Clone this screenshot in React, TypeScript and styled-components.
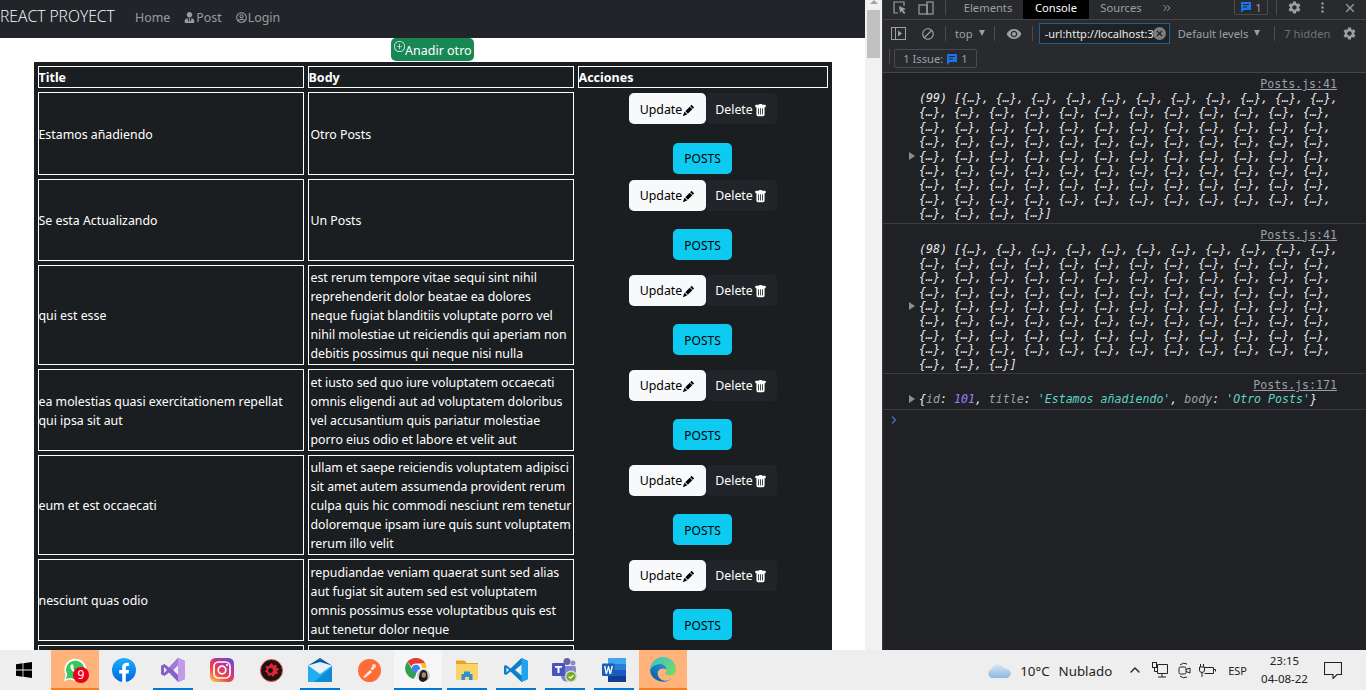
import React from "react";
import styled, { createGlobalStyle } from "styled-components";
import {
  BsFillPencilFill,
  BsFillTrashFill,
  BsPlusCircle,
  BsThreeDotsVertical,
} from "react-icons/bs";
import { FaRegUserCircle, FaUserTie } from "react-icons/fa";
import { MdBlock, MdSettings, MdVisibility } from "react-icons/md";
import { ChevronRight, ChevronUp, ChevronsRight, X } from "lucide-react";

const uiFont = `"Noto Sans", "Open Sans", sans-serif`;
const monoFont = `"DejaVu Sans Mono", "Liberation Mono", monospace`;

const GlobalStyle = createGlobalStyle`
  html, body {
    margin: 0;
    padding: 0;
    height: 690px;
    overflow: hidden;
    font-family: ${uiFont};
  }
  * { box-sizing: border-box; }
`;

const Screen = styled.div`
  width: 1366px;
  height: 690px;
  display: flex;
  flex-direction: column;
`;

const Workspace = styled.div`
  display: flex;
  height: 650px;
  overflow: hidden;
`;

/* ---------- page ---------- */

const Page = styled.div`
  width: 865px;
  height: 650px;
  overflow: hidden;
  background: #fff;
`;

const Navbar = styled.nav`
  height: 38px;
  background: #212529;
  display: flex;
  align-items: center;
`;

const Brand = styled.span`
  width: 135px;
  font-family: "Open Sans", sans-serif;
  font-weight: 300;
  font-size: 15.7px;
  color: #fff;
  white-space: nowrap;
  margin-top: -6px;
`;

const NavLink = styled.a`
  display: inline-flex;
  align-items: center;
  font-size: 12.4px;
  color: rgba(255, 255, 255, 0.55);
  margin-right: 14px;
  margin-top: -4px;
  svg {
    width: 11px;
    height: 11px;
    margin-right: 1px;
  }
`;

const AddRow = styled.div`
  display: flex;
  justify-content: center;
  height: 24px;
`;

const AddButton = styled.button`
  width: 83px;
  height: 23px;
  padding: 2px 2px 0 3px;
  border: 0;
  border-radius: 5px;
  background: #198754;
  color: #fff;
  font-family: ${uiFont};
  font-size: 12.5px;
  display: flex;
  align-items: center;
  white-space: nowrap;
  svg {
    width: 11px;
    height: 11px;
    margin-top: -9px;
    flex: none;
  }
`;

const PostsTable = styled.table`
  width: 798px;
  margin: 0 auto;
  table-layout: fixed;
  border-collapse: separate;
  border-spacing: 4px;
  background: #1b1e20;
  color: #fff;
  font-size: 12.35px;
  line-height: 19.1px;
`;

const HeadCell = styled.th`
  border: 1px solid #fff;
  padding: 1px 0 0;
  height: 22px;
  text-align: left;
  font-size: 12.5px;
  font-weight: 700;
`;

const Cell = styled.td<{ $body?: boolean }>`
  border: 1px solid #fff;
  padding: 2px 0 0 ${(p) => (p.$body ? "2px" : "0")};
  letter-spacing: ${(p) => (p.$body ? "-0.03px" : "0")};
  vertical-align: middle;
  white-space: pre-line;
`;

const ActionCell = styled.td`
  padding: 1px;
  text-align: center;
  vertical-align: middle;
`;

const ButtonGroup = styled.div`
  display: inline-flex;
  vertical-align: top;
`;

const GroupButton = styled.button<{ $dark?: boolean }>`
  height: 31px;
  width: ${(p) => (p.$dark ? "71px" : "77px")};
  border: 0;
  border-radius: 5px;
  background: ${(p) => (p.$dark ? "#212529" : "#f8f9fa")};
  color: ${(p) => (p.$dark ? "#fff" : "#000")};
  font-family: ${uiFont};
  font-size: 12.35px;
  padding: 1px 0 0;
  display: inline-flex;
  align-items: center;
  justify-content: center;
  svg {
    width: ${(p) => (p.$dark ? "13px" : "11px")};
    height: ${(p) => (p.$dark ? "13px" : "11px")};
    margin-top: 2px;
    margin-left: 1px;
  }
`;

const PostsButton = styled.button`
  display: block;
  width: 59px;
  height: 31px;
  margin: 18.5px auto 0;
  border: 0;
  border-radius: 5px;
  background: #0dcaf0;
  color: #000;
  font-family: ${uiFont};
  font-size: 12px;
  padding: 1px 0 0;
`;

const Scrollbar = styled.div`
  width: 17px;
  height: 650px;
  background: #f1f1f1;
  padding: 0 2px;
`;

const ScrollArrow = styled.div`
  width: 0;
  height: 0;
  margin: 0 auto 6px;
  border-left: 4px solid transparent;
  border-right: 4px solid transparent;
  border-bottom: 4px solid #a3a3a3;
`;

const ScrollThumb = styled.div`
  height: 48px;
  background: #c1c1c1;
`;

/* ---------- devtools ---------- */

const DevTools = styled.div`
  width: 484px;
  height: 650px;
  background: #202124;
  border-left: 1px solid #3c3c3e;
  color: #bdc1c6;
  font-family: ${uiFont};
  font-size: 11.2px;
`;

const TabBar = styled.div`
  height: 20px;
  background: #292a2d;
  border-bottom: 1px solid #45464a;
  display: flex;
  align-items: flex-start;
  padding-left: 9px;
`;

const ToolIcon = styled.span<{ $w?: number; $ml?: number }>`
  display: inline-flex;
  align-items: center;
  justify-content: center;
  flex: none;
  height: 15px;
  width: ${(p) => p.$w ?? 16}px;
  margin-left: ${(p) => p.$ml ?? 0}px;
  color: #9aa0a6;
`;

const VSep = styled.span<{ $ml?: number; $mr?: number; $h?: number }>`
  flex: none;
  width: 1px;
  height: ${(p) => p.$h ?? 15}px;
  background: #4a4b4f;
  margin-left: ${(p) => p.$ml ?? 0}px;
  margin-right: ${(p) => p.$mr ?? 0}px;
`;

const Tab = styled.span<{ $active?: boolean; $w: number }>`
  flex: none;
  width: ${(p) => p.$w}px;
  height: 19px;
  text-align: center;
  line-height: 15px;
  color: ${(p) => (p.$active ? "#fff" : "#9aa0a6")};
  background: ${(p) => (p.$active ? "#000" : "transparent")};
`;

const CountBadge = styled.span`
  flex: none;
  width: 34px;
  height: 15px;
  margin-left: 53px;
  border: 1px solid #4a4b4f;
  border-top: 0;
  border-radius: 0 0 2px 2px;
  display: inline-flex;
  align-items: center;
  justify-content: center;
  gap: 3px;
  color: #9aa0a6;
`;

const FilterRow = styled.div`
  height: 29px;
  background: #292a2d;
  display: flex;
  align-items: center;
  padding: 0 0 2px 8px;
  > svg {
    flex: none;
  }
`;

const Muted = styled.span<{ $dim?: boolean; $ml?: number }>`
  flex: none;
  margin-left: ${(p) => p.$ml ?? 0}px;
  color: ${(p) => (p.$dim ? "#6f7377" : "#9aa0a6")};
  white-space: nowrap;
`;

const Caret = styled.span`
  display: inline-block;
  flex: none;
  margin-left: 6px;
  margin-bottom: 2px;
  width: 0;
  height: 0;
  border-left: 3.5px solid transparent;
  border-right: 3.5px solid transparent;
  border-top: 6px solid #9aa0a6;
`;

const FilterInput = styled.div`
  flex: none;
  width: 131px;
  height: 21px;
  border: 1px solid #1f5f8b;
  background: #202124;
  color: #e8eaed;
  font-size: 11px;
  line-height: 19px;
  padding-left: 5px;
  overflow: hidden;
  white-space: nowrap;
  display: flex;
  align-items: center;
  justify-content: space-between;
  position: relative;
`;

const ClearDot = styled.span`
  position: absolute;
  right: 3px;
  top: 3px;
  width: 13px;
  height: 13px;
  border-radius: 50%;
  background: #7b7d80;
  color: #202124;
  display: inline-flex;
  align-items: center;
  justify-content: center;
`;

const IssueRow = styled.div`
  height: 24px;
  background: #292a2d;
  border-bottom: 1px solid #45464a;
  display: flex;
  align-items: flex-start;
  padding-left: 6px;
`;

const IssueBadge = styled.span`
  width: 83px;
  height: 19px;
  margin-left: 4px;
  border: 1px solid #4a4b4f;
  border-radius: 2px;
  display: inline-flex;
  align-items: center;
  justify-content: center;
  gap: 3px;
  color: #9aa0a6;
`;

const ConsoleRow = styled.div<{ $pb?: number }>`
  padding: 4px 29px ${(p) => p.$pb ?? 2}px 36px;
  border-bottom: 1px solid #3a3b3e;
  font-family: ${monoFont};
  font-size: 11.6px;
  line-height: 14.4px;
  color: #e8eaed;
`;

const Source = styled.div`
  text-align: right;
  color: #9aa0a6;
  line-height: 14px;
  height: 14px;
  text-decoration: underline;
`;

const LogLine = styled.div<{ $marker?: boolean }>`
  font-style: italic;
  white-space: pre;
  height: 14.4px;
  &::before {
    content: "";
    display: ${(p) => (p.$marker ? "inline-block" : "none")};
    width: 0;
    height: 0;
    margin-left: -10px;
    margin-right: 4px;
    border-top: 4px solid transparent;
    border-bottom: 4px solid transparent;
    border-left: 6px solid #8b8e92;
  }
`;

const Key = styled.span`
  color: #9aa0a6;
`;
const Num = styled.span`
  color: #9980ff;
`;
const Str = styled.span`
  color: #5cd5c5;
`;

const Prompt = styled.div`
  padding: 4px 0 0 5px;
  color: #3f6fbf;
  display: flex;
`;

/* ---------- taskbar ---------- */

const Taskbar = styled.div`
  height: 40px;
  background: #eeeeee;
  display: flex;
  align-items: stretch;
  font-family: ${uiFont};
`;

const StartButton = styled.div`
  width: 51px;
  display: flex;
  align-items: center;
  padding-left: 16px;
`;

const TaskItem = styled.div<{ $state?: "open" | "active" | "flash" }>`
  position: relative;
  flex: none;
  width: 48px;
  margin-right: 1px;
  display: flex;
  align-items: center;
  justify-content: center;
  background: ${(p) =>
    p.$state === "flash"
      ? "#ffb27a"
      : p.$state === "active"
      ? "#f6f6f6"
      : "transparent"};
  &::after {
    content: "";
    display: ${(p) => (p.$state ? "block" : "none")};
    position: absolute;
    bottom: 0;
    left: ${(p) => (p.$state === "open" ? "4px" : "0")};
    right: ${(p) => (p.$state === "open" ? "4px" : "0")};
    height: 2px;
    background: ${(p) => (p.$state === "flash" ? "#ff7a18" : "#0078d4")};
  }
`;

const CountDot = styled.span`
  position: absolute;
  left: 22px;
  top: 17px;
  width: 16px;
  height: 16px;
  border-radius: 50%;
  background: #e8001c;
  color: #fff;
  font-size: 12px;
  line-height: 16px;
  text-align: center;
`;

const Tray = styled.div`
  margin-left: auto;
  display: flex;
  align-items: center;
  color: #222;
  font-size: 13.3px;
  padding-right: 24px;
`;

const Weather = styled.span`
  display: inline-flex;
  align-items: center;
  white-space: nowrap;
  margin-right: 15px;
  padding-top: 1px;
  gap: 9px;
`;

const TrayIcon = styled.span<{ $mr: number }>`
  display: inline-flex;
  margin-right: ${(p) => p.$mr}px;
  color: #222;
`;

const Lang = styled.span`
  font-size: 11px;
  margin-right: 14px;
`;

const Clock = styled.div`
  width: 47px;
  font-size: 11.5px;
  line-height: 18px;
  white-space: nowrap;
  text-align: center;
  margin-right: 16px;
`;

/* ---------- drawings ---------- */

const InspectIcon = () => (
  <svg width="16" height="15" viewBox="0 0 16 15" fill="none">
    <path d="M6 13H2V2h10v4" stroke="#9aa0a6" strokeWidth="1.2" />
    <path d="M7 6l7 3-3 1 2.5 3-1.5 1-2.5-3L8 13z" fill="#9aa0a6" />
  </svg>
);

const DeviceIcon = () => (
  <svg width="16" height="15" viewBox="0 0 16 15" fill="none" stroke="#9aa0a6" strokeWidth="1.2">
    <rect x="1" y="5" width="8" height="9" />
    <rect x="9" y="2" width="6" height="12" />
  </svg>
);

const ChatIcon = () => (
  <svg width="12" height="12" viewBox="0 0 12 12">
    <path d="M1 1h10v8H4l-3 3z" fill="#1a73e8" />
    <path d="M3 3.5h6M3 6h4" stroke="#292a2d" />
  </svg>
);

const SidebarIcon = () => (
  <svg width="15" height="13" viewBox="0 0 15 13" fill="none">
    <rect x="0.5" y="0.5" width="14" height="12" stroke="#9aa0a6" />
    <path d="M4.5 0v13" stroke="#9aa0a6" />
    <path d="M7 3.5l4 3-4 3z" fill="#9aa0a6" />
  </svg>
);

const WindowsLogo = () => (
  <svg width="16" height="16" viewBox="0 0 16 16" fill="#000">
    <path d="M0 2.2l6.6-.9v6.3H0zM7.4 1.2L16 0v7.6H7.4zM0 8.4h6.6v6.3L0 13.8zM7.4 8.4H16V16l-8.6-1.2z" />
  </svg>
);

const WhatsappLogo = () => (
  <svg width="26" height="26" viewBox="0 0 26 26">
    <path d="M2 24l1.7-6A11 11 0 1 1 8 22.3z" fill="#fff" />
    <path d="M4 22l1.3-4.5A9.2 9.2 0 1 1 8.6 20.8z" fill="#35c95c" />
    <path d="M9.3 7.5c-1 .8-1.2 2.2-.6 3.7 1 2.3 3 4.3 5.4 5.3 1.4.5 2.7.3 3.4-.7.4-.6.4-1.2.2-1.4l-2.1-1.1-1 1.1c-1.4-.4-3-2-3.6-3.5l.9-1-1-2.3c-.2-.2-.6-.2-1 0z" fill="#fff" />
  </svg>
);

const FacebookLogo = () => (
  <svg width="24" height="24" viewBox="0 0 24 24">
    <defs>
      <linearGradient id="fbg" x1="0" y1="0" x2="0" y2="1">
        <stop offset="0" stopColor="#19b0fb" />
        <stop offset="1" stopColor="#0164e0" />
      </linearGradient>
    </defs>
    <circle cx="12" cy="12" r="12" fill="url(#fbg)" />
    <path d="M10.2 24v-8.6H7.2V12h3V9.3c0-3 1.8-4.6 4.5-4.6 1.3 0 2.4.2 2.4.2v2.9h-1.4c-1.4 0-1.9.9-1.9 1.8V12h3.2l-.5 3.4h-2.7V24z" fill="#fff" />
  </svg>
);

const StudioLogo = () => (
  <svg width="24" height="24" viewBox="0 0 24 24">
    <path d="M17 0l7 3v18l-7 3-9-9.5L3.500 18 0 16.300V7.700L3.500 6 8 9.500z" fill="#8661c5" />
    <path d="M17 0l7 3v18l-7 3z" fill="#c19be8" />
    <path d="M17 7l-5 5 5 5z" fill="#eeeeee" />
    <path d="M3 9v6l3-3z" fill="#eeeeee" />
    <path d="M8 9.500L17 0v7l-5 5z" fill="#a27bd8" />
  </svg>
);

const InstagramLogo = () => (
  <svg width="24" height="24" viewBox="0 0 24 24">
    <defs>
      <linearGradient id="igg" x1="0.1" y1="1" x2="0.8" y2="0">
        <stop offset="0" stopColor="#fdc34f" />
        <stop offset="0.35" stopColor="#f0463f" />
        <stop offset="0.7" stopColor="#c5338f" />
        <stop offset="1" stopColor="#6a4ccd" />
      </linearGradient>
    </defs>
    <rect width="24" height="24" rx="5.500" fill="url(#igg)" />
    <rect x="4" y="4" width="16" height="16" rx="4.500" fill="none" stroke="#fff" strokeWidth="1.700" />
    <circle cx="12" cy="12" r="3.800" fill="none" stroke="#fff" strokeWidth="1.700" />
    <circle cx="17" cy="7" r="1.100" fill="#fff" />
  </svg>
);

const BoosterLogo = () => (
  <svg width="23" height="23" viewBox="0 0 23 23">
    <circle cx="11.500" cy="11.500" r="11" fill="#1b1416" stroke="#f04a50" strokeWidth="1" />
    <path d="M11.500 4l2 2.500 3-1-.2 3 3 1.500-2.300 2 1 3-3-.1-1.500 3-2.500-2-3 1-.5-3-3-1.500 2.300-2L5.500 7l3 .2z" fill="#e52330" />
    <circle cx="10.500" cy="11.500" r="2.400" fill="#1b1416" />
  </svg>
);

const MailLogo = () => (
  <svg width="24" height="24" viewBox="0 0 24 24">
    <path d="M0 7.500h24V24H0z" fill="#1eb0ee" />
    <path d="M0 7.500L12 4l12 3.500L12 16z" fill="#e8f1f8" />
    <path d="M0 7.500L12 0l12 7.500L12 4z" fill="#0a5fae" />
    <path d="M24 9v15H6z" fill="#0d8bd6" />
  </svg>
);

const PostmanLogo = () => (
  <svg width="23" height="23" viewBox="0 0 23 23">
    <circle cx="11.500" cy="11.500" r="11.500" fill="#ff6c37" />
    <path d="M5 18l7-7 2 2-7 6zM12.500 9.500l3-3 2 1.500-3 3.500z" fill="#fff" opacity="0.85" />
    <circle cx="16" cy="7" r="2" fill="#ffd9c9" />
  </svg>
);

const ChromeLogo = () => (
  <svg width="26" height="26" viewBox="0 0 26 26">
    <path d="M11 1a11 11 0 0 1 9.500 5.500H11a5 5 0 0 0-4.700 3L2.500 4.500A11 11 0 0 1 11 1z" fill="#e33b2e" />
    <path d="M2.500 4.500l5 8.500a5 5 0 0 0 4.500 3l-3.300 6A11 11 0 0 1 2.500 4.500z" fill="#30a24a" />
    <path d="M20.500 6.500a11 11 0 0 1-9.800 15.500l5-8.500a5 5 0 0 0-.3-7z" fill="#f9c21a" />
    <circle cx="11" cy="12" r="4.200" fill="#3f82ee" />
    <circle cx="18.500" cy="18.500" r="7.500" fill="#fff" />
    <circle cx="18.500" cy="18.500" r="6.500" fill="#c9ccd0" />
    <path d="M14 22c0-4 1-9 4.500-9s4 4 4 6 .5 3-1 4l-3 2c-2 0-4-1-4.500-3z" fill="#1d1a1b" />
    <ellipse cx="18.800" cy="18" rx="2.200" ry="2.800" fill="#b9835f" />
  </svg>
);

const FolderLogo = () => (
  <svg width="22" height="22" viewBox="0 0 22 22">
    <path d="M0 2.500A1 1 0 0 1 1 1.500h7.500l2 2.500H22v4H0z" fill="#e5a322" />
    <path d="M0 5h21a1 1 0 0 1 1 1v14a1 1 0 0 1-1 1H1a1 1 0 0 1-1-1z" fill="#fbd366" />
    <path d="M5.500 21v-6H8v-2.500h6V15h2.500v6h-3.500v-3H9v3z" fill="#2d8fd5" />
  </svg>
);

const CodeLogo = () => (
  <svg width="24" height="24" viewBox="0 0 24 24">
    <path d="M17.500 0L24 3v18l-6.500 3L6.500 13.500 2 17l-2-1V8l2-1 4.500 3.500z" fill="#0a7fcb" />
    <path d="M17.500 0L24 3v18l-6.500 3z" fill="#1fa5ef" />
    <path d="M17.500 6.500L11 12l6.500 5.500z" fill="#eeeeee" />
    <path d="M2.500 9.500v5L5 12z" fill="#eeeeee" />
  </svg>
);

const TeamsLogo = () => (
  <svg width="26" height="26" viewBox="0 0 26 26">
    <circle cx="15" cy="4.500" r="3.500" fill="#6264a7" />
    <circle cx="21" cy="6" r="2.500" fill="#8b8cc7" />
    <rect x="17" y="9" width="7" height="9" rx="1.500" fill="#8b8cc7" />
    <path d="M9 9h11v10a5.500 5.500 0 0 1-11 0z" fill="#7b83d3" />
    <rect y="6" width="13" height="13" rx="1" fill="#4b53bc" />
    <path d="M3 9h7v1.800H7.500V16h-2v-5.200H3z" fill="#fff" />
    <circle cx="19" cy="19.500" r="6" fill="#d8dcd4" />
    <circle cx="19" cy="19.500" r="4.600" fill="#74a81e" />
    <path d="M16.800 19.500l1.700 1.700 3-3" stroke="#fff" strokeWidth="1.300" fill="none" />
  </svg>
);

const WordLogo = () => (
  <svg width="24" height="24" viewBox="0 0 24 24">
    <rect x="6" y="0" width="18" height="6.500" fill="#41a5ee" />
    <rect x="6" y="6" width="18" height="6" fill="#2b7cd3" />
    <rect x="6" y="12" width="18" height="6" fill="#185abd" />
    <rect x="6" y="18" width="18" height="6" fill="#103f91" />
    <rect x="0" y="5.500" width="12.500" height="12.500" rx="1" fill="#1a5fbb" />
    <path d="M2 8h1.500l1 5.500L6 8h1l1.300 5.500L9.500 8H11l-2 8H7.500L6.300 11 5 16H3.700z" fill="#fff" />
  </svg>
);

const EdgeLogo = () => (
  <svg width="26" height="26" viewBox="0 0 26 26">
    <defs>
      <linearGradient id="edg" x1="0" y1="1" x2="1" y2="0">
        <stop offset="0" stopColor="#0b57a8" />
        <stop offset="1" stopColor="#1ca0dc" />
      </linearGradient>
      <linearGradient id="edt" x1="0" y1="0" x2="1" y2="1">
        <stop offset="0" stopColor="#33c3d3" />
        <stop offset="1" stopColor="#7ddc5a" />
      </linearGradient>
    </defs>
    <path d="M13 0a13 13 0 0 1 13 13c0 3.500-3 5.500-6 5.500-3 0-5-1-5-2.500 0-.8 1.500-1 1.500-3.500C16.500 9 13 7 10 7 5 7 1.500 10 0 13 0 6 6 0 13 0z" fill="url(#edt)" />
    <path d="M0 13c1.500-3 5-6 10-6 3 0 6.500 2 6.500 5.500-2-1.500-7-2-8.500 2-1.300 4 1.500 8 5.500 9 4 .8 7-.5 9-3A13 13 0 0 1 0 13z" fill="url(#edg)" />
  </svg>
);

const CloudIcon = () => (
  <svg width="23" height="15" viewBox="0 0 23 15">
    <defs>
      <linearGradient id="cld" x1="0" y1="0" x2="0" y2="1">
        <stop offset="0" stopColor="#d3e5f7" />
        <stop offset="1" stopColor="#8db8e2" />
      </linearGradient>
    </defs>
    <path d="M5 15a4.500 4.500 0 0 1-1-8.900A6 6 0 0 1 15 4.500a4 4 0 0 1 3.500 1.500A4.500 4.500 0 0 1 18 15z" fill="url(#cld)" />
  </svg>
);

const NetworkIcon = () => (
  <svg width="16" height="16" viewBox="0 0 16 16" fill="none" stroke="#222">
    <path d="M5.500 2.500h10v9h-10zM10 11.500V15M6 15h8" />
    <rect x="0.500" y="0.500" width="4" height="5" fill="#eee" />
    <path d="M2.500 5.500v4h3" />
  </svg>
);

const CameraIcon = () => (
  <svg width="13" height="17" viewBox="0 0 13 17" fill="none" stroke="#222">
    <path d="M2 3A6 6 0 0 1 9 2M2 14a6 6 0 0 0 7 1" />
    <rect x="1" y="5" width="7" height="7" rx="1.500" />
    <path d="M8 7.500l4-1.500v5l-4-1.500" />
  </svg>
);

const PowerIcon = () => (
  <svg width="17" height="13" viewBox="0 0 17 13" fill="none" stroke="#222">
    <path d="M5.500 3.500h9v6h-9M14.500 5.500h2v2" />
    <path d="M1.500 0v3M4.500 0v3M0.500 3h5v3a2.500 2.500 0 0 1-5 0zM3 8.500V13" />
  </svg>
);

const NoteIcon = () => (
  <svg width="18" height="17" viewBox="0 0 18 17" fill="none" stroke="#222" strokeWidth="1.100">
    <path d="M0.500 0.500h17v12h-4.500l-4 4v-4H0.500z" />
  </svg>
);

/* ---------- data ---------- */

const posts = [
  { title: "Estamos añadiendo", body: "Otro Posts" },
  { title: "Se esta Actualizando", body: "Un Posts" },
  {
    title: "qui est esse",
    body: "est rerum tempore vitae sequi sint nihil reprehenderit dolor beatae ea dolores\nneque fugiat blanditiis voluptate porro vel nihil molestiae ut reiciendis qui aperiam non debitis possimus qui neque nisi nulla",
  },
  {
    title: "ea molestias quasi exercitationem repellat qui ipsa sit aut",
    body: "et iusto sed quo iure voluptatem occaecati omnis eligendi aut ad voluptatem doloribus vel accusantium quis pariatur molestiae porro eius odio et labore et velit aut",
  },
  {
    title: "eum et est occaecati",
    body: "ullam et saepe reiciendis voluptatem adipisci sit amet autem assumenda provident rerum culpa quis hic commodi nesciunt rem tenetur doloremque ipsam iure quis sunt voluptatem rerum illo velit",
  },
  {
    title: "nesciunt quas odio",
    body: "repudiandae veniam quaerat sunt sed alias aut fugiat sit autem sed est voluptatem omnis possimus esse voluptatibus quis est aut tenetur dolor neque",
  },
  {
    title: "dolorem eum magni eos aperiam quia",
    body: "ut aspernatur corporis harum nihil quis provident sequi mollitia nobis aliquid molestiae perspiciatis et ea nemo ab reprehenderit accusantium quas voluptate dolores velit et doloremque molestiae",
  },
];

const logLines = (total: number, prefix: string) => {
  const first = 11;
  const perLine = 12;
  const lines: string[] = [];
  lines.push(prefix + " [" + Array(first).fill("{…}").join(", ") + ",");
  let left = total - first;
  while (left > 0) {
    const n = Math.min(left, perLine);
    left -= n;
    lines.push(Array(n).fill("{…}").join(", ") + (left > 0 ? "," : "]"));
  }
  return lines;
};

const LogEntry = ({ total }: { total: number }) => (
  <ConsoleRow>
    <Source>Posts.js:41</Source>
    {logLines(total, `(${total})`).map((line, i) => (
      <LogLine key={i} $marker={i === 4}>
        {line}
      </LogLine>
    ))}
  </ConsoleRow>
);

const App: React.FC = () => {
  return (
    <Screen>
      <GlobalStyle />
      <Workspace>
        <Page>
          <Navbar>
            <Brand>REACT PROYECT</Brand>
            <NavLink>Home</NavLink>
            <NavLink>
              <FaUserTie />
              Post
            </NavLink>
            <NavLink>
              <FaRegUserCircle />
              Login
            </NavLink>
          </Navbar>
          <AddRow>
            <AddButton>
              <BsPlusCircle />
              Anadir otro
            </AddButton>
          </AddRow>
          <PostsTable>
            <colgroup>
              <col style={{ width: 266 }} />
              <col style={{ width: 266 }} />
              <col style={{ width: 250 }} />
            </colgroup>
            <thead>
              <tr>
                <HeadCell>Title</HeadCell>
                <HeadCell>Body</HeadCell>
                <HeadCell>Acciones</HeadCell>
              </tr>
            </thead>
            <tbody>
              {posts.map((post, index) => (
                <tr key={index}>
                  <Cell>{post.title}</Cell>
                  <Cell $body>{post.body}</Cell>
                  <ActionCell>
                    <ButtonGroup>
                      <GroupButton>
                        Update
                        <BsFillPencilFill />
                      </GroupButton>
                      <GroupButton $dark>
                        Delete
                        <BsFillTrashFill />
                      </GroupButton>
                    </ButtonGroup>
                    <PostsButton>POSTS</PostsButton>
                  </ActionCell>
                </tr>
              ))}
            </tbody>
          </PostsTable>
        </Page>
        <Scrollbar>
          <ScrollArrow />
          <ScrollThumb />
        </Scrollbar>
        <DevTools>
          <TabBar>
            <ToolIcon>
              <InspectIcon />
            </ToolIcon>
            <ToolIcon $ml={10}>
              <DeviceIcon />
            </ToolIcon>
            <VSep $ml={11} $mr={7} />
            <Tab $w={70}>Elements</Tab>
            <Tab $w={66} $active>
              Console
            </Tab>
            <Tab $w={64}>Sources</Tab>
            <ToolIcon $w={28}>
              <ChevronsRight size={12} />
            </ToolIcon>
            <CountBadge>
              <ChatIcon />1
            </CountBadge>
            <VSep $ml={8} />
            <ToolIcon $ml={9}>
              <MdSettings size={15} />
            </ToolIcon>
            <ToolIcon $ml={12}>
              <BsThreeDotsVertical size={13} />
            </ToolIcon>
            <ToolIcon $ml={12}>
              <X size={14} />
            </ToolIcon>
          </TabBar>
          <FilterRow>
            <SidebarIcon />
            <ToolIcon $w={14} $ml={15}>
              <MdBlock size={16} />
            </ToolIcon>
            <VSep $ml={10} $mr={9} />
            <Muted>top</Muted>
            <Caret />
            <VSep $ml={9} $mr={11} />
            <ToolIcon>
              <MdVisibility size={16} />
            </ToolIcon>
            <VSep $ml={10} $mr={6} />
            <FilterInput>
              -url:http://localhost:3
              <ClearDot>
                <X size={9} strokeWidth={3} />
              </ClearDot>
            </FilterInput>
            <Muted $ml={8}>Default levels</Muted>
            <Caret />
            <VSep $ml={14} $mr={9} />
            <Muted $dim>7 hidden</Muted>
            <ToolIcon $ml={11}>
              <MdSettings size={15} />
            </ToolIcon>
          </FilterRow>
          <IssueRow>
            <VSep />
            <IssueBadge>
              1 Issue: <ChatIcon />1
            </IssueBadge>
          </IssueRow>
          <LogEntry total={99} />
          <LogEntry total={98} />
          <ConsoleRow $pb={3}>
            <Source>Posts.js:171</Source>
            <LogLine $marker>
              {"{"}
              <Key>id</Key>: <Num>101</Num>, <Key>title</Key>:{" "}
              <Str>'Estamos añadiendo'</Str>, <Key>body</Key>:{" "}
              <Str>'Otro Posts'</Str>
              {"}"}
            </LogLine>
          </ConsoleRow>
          <Prompt>
            <ChevronRight size={12} strokeWidth={3} />
          </Prompt>
        </DevTools>
      </Workspace>
      <Taskbar>
        <StartButton>
          <WindowsLogo />
        </StartButton>
        <TaskItem $state="flash">
          <WhatsappLogo />
          <CountDot>9</CountDot>
        </TaskItem>
        <TaskItem>
          <FacebookLogo />
        </TaskItem>
        <TaskItem $state="open">
          <StudioLogo />
        </TaskItem>
        <TaskItem>
          <InstagramLogo />
        </TaskItem>
        <TaskItem>
          <BoosterLogo />
        </TaskItem>
        <TaskItem $state="open">
          <MailLogo />
        </TaskItem>
        <TaskItem>
          <PostmanLogo />
        </TaskItem>
        <TaskItem $state="active">
          <ChromeLogo />
        </TaskItem>
        <TaskItem $state="open">
          <FolderLogo />
        </TaskItem>
        <TaskItem $state="open">
          <CodeLogo />
        </TaskItem>
        <TaskItem $state="open">
          <TeamsLogo />
        </TaskItem>
        <TaskItem $state="open">
          <WordLogo />
        </TaskItem>
        <TaskItem $state="flash">
          <EdgeLogo />
        </TaskItem>
        <Tray>
          <Weather>
            <CloudIcon />
            <span>10°C</span>
            <span>Nublado</span>
          </Weather>
          <TrayIcon $mr={9}>
            <ChevronUp size={16} />
          </TrayIcon>
          <TrayIcon $mr={10}>
            <NetworkIcon />
          </TrayIcon>
          <TrayIcon $mr={8}>
            <CameraIcon />
          </TrayIcon>
          <TrayIcon $mr={12}>
            <PowerIcon />
          </TrayIcon>
          <Lang>ESP</Lang>
          <Clock>
            23:15
            <br />
            04-08-22
          </Clock>
          <NoteIcon />
        </Tray>
      </Taskbar>
    </Screen>
  );
};

export default App;
